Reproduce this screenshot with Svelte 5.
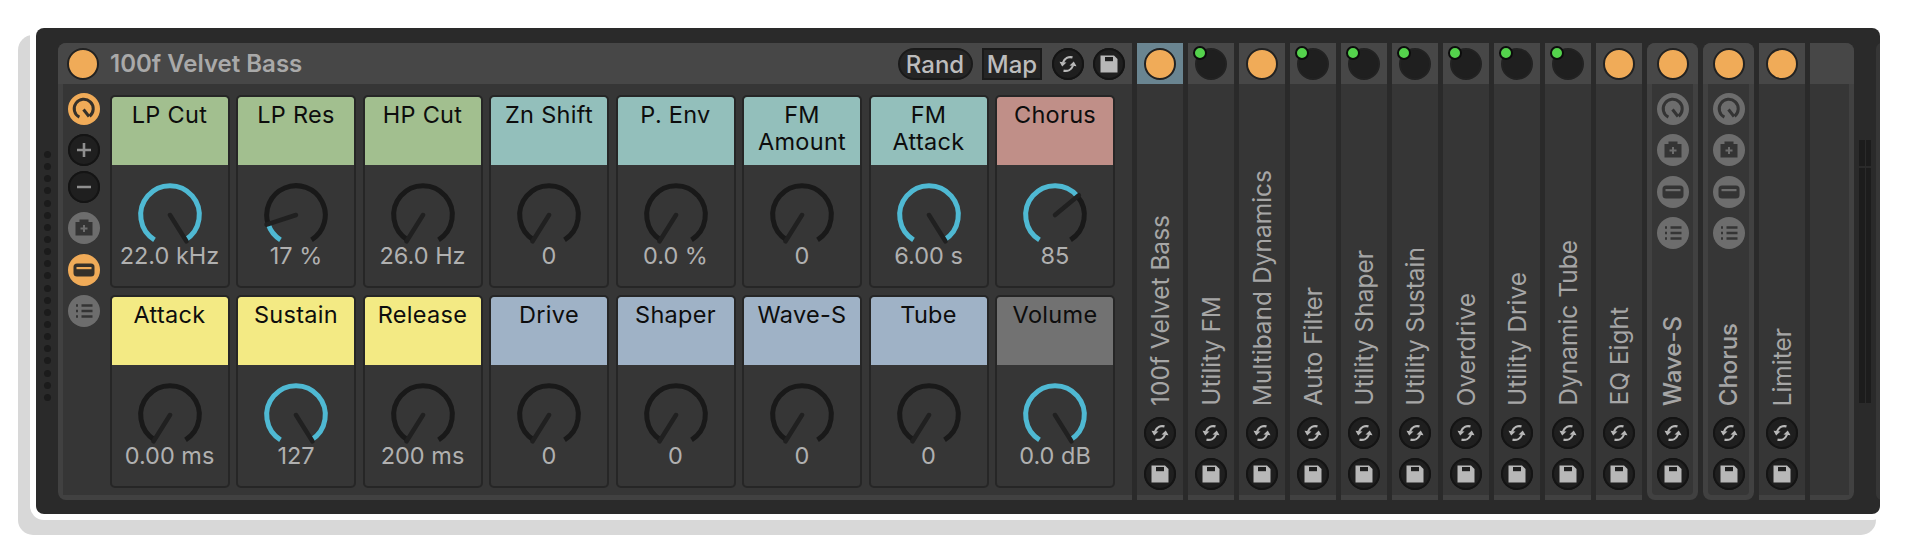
<script lang="ts">
  // device rack: one macro device, then the chain strip of folded devices
  const START = -148;
  const SWEEP = 296;

  function pt(deg: number, r: number) {
    const a = (deg * Math.PI) / 180;
    return `${(34 + r * Math.sin(a)).toFixed(2)} ${(34 - r * Math.cos(a)).toFixed(2)}`;
  }
  function arc(from: number, to: number) {
    const a = START + SWEEP * from;
    const b = START + SWEEP * to;
    return `M${pt(a, 29.3)} A29.3 29.3 0 ${b - a > 180 ? 1 : 0} 1 ${pt(b, 29.3)}`;
  }

  const rows = [
    [
      { name: 'LP Cut', value: '22.0 kHz', pos: 1, tone: 'green' },
      { name: 'LP Res', value: '17 %', pos: 0.135, tone: 'green' },
      { name: 'HP Cut', value: '26.0 Hz', pos: 0, tone: 'green' },
      { name: 'Zn Shift', value: '0', pos: 0, tone: 'teal' },
      { name: 'P. Env', value: '0.0 %', pos: 0, tone: 'teal' },
      { name: 'FM Amount', value: '0', pos: 0, tone: 'teal' },
      { name: 'FM Attack', value: '6.00 s', pos: 1, tone: 'teal' },
      { name: 'Chorus', value: '85', pos: 0.67, tone: 'pink' }
    ],
    [
      { name: 'Attack', value: '0.00 ms', pos: 0, tone: 'yellow' },
      { name: 'Sustain', value: '127', pos: 1, tone: 'yellow' },
      { name: 'Release', value: '200 ms', pos: 0, tone: 'yellow' },
      { name: 'Drive', value: '0', pos: 0, tone: 'blue' },
      { name: 'Shaper', value: '0', pos: 0, tone: 'blue' },
      { name: 'Wave-S', value: '0', pos: 0, tone: 'blue' },
      { name: 'Tube', value: '0', pos: 0, tone: 'blue' },
      { name: 'Volume', value: '0.0 dB', pos: 1, tone: 'gray' }
    ]
  ];

  const chain = [
    { name: '100f Velvet Bass', on: true, selected: true },
    { name: 'Utility FM', on: false },
    { name: 'Multiband Dynamics', on: true },
    { name: 'Auto Filter', on: false },
    { name: 'Utility Shaper', on: false },
    { name: 'Utility Sustain', on: false },
    { name: 'Overdrive', on: false },
    { name: 'Utility Drive', on: false },
    { name: 'Dynamic Tube', on: false },
    { name: 'EQ Eight', on: true },
    { name: 'Wave-S', on: true, group: true },
    { name: 'Chorus', on: true, group: true },
    { name: 'Limiter', on: true }
  ];
</script>

{#snippet glyph(kind: string)}
  <svg class="glyph" viewBox="0 0 32 32">
    {#if kind === 'knob'}
      <path class="line" d="M21.6 23.2A9.5 9.5 0 1 0 11.4 24.2" />
      <path class="line" d="M15.5 16.5L21 23.5" />
    {:else if kind === 'plus'}
      <path class="line thin" d="M9 16H23M16 9V23" />
    {:else if kind === 'minus'}
      <path class="line thin" d="M9 16H23" />
    {:else if kind === 'camera'}
      <path class="fill" d="M11.5 7.5H20.5V10H24.5V23.5H7.5V10H11.5Z" />
      <path class="cut" d="M12.5 16.5H19.5M16 13V20" />
    {:else if kind === 'fold'}
      <rect class="fill" x="5.5" y="9.5" width="21" height="13" rx="3.5" />
      <rect class="hole" x="8.5" y="13" width="15" height="2.2" />
    {:else if kind === 'list'}
      <path class="line list" d="M13.5 10.5H24.5M13.5 16H24.5M13.5 21.5H24.5" />
      <path class="line list" d="M8 10.5H10M8 16H10M8 21.5H10" />
    {:else if kind === 'sync'}
      <path class="stroke" d="M20.5 9.4C16.5 8.4 12.5 10.2 11 14.5" />
      <path class="solid" d="M7.5 13.8L14.5 14.4L10.2 18.4Z" />
      <path class="stroke" d="M11.5 22.6C15.5 23.6 19.5 21.8 21 17.5" />
      <path class="solid" d="M24.5 18.2L17.5 17.6L21.8 13.6Z" />
    {:else if kind === 'save'}
      <path class="solid" d="M7.5 7.5H21L24.5 11V24.5H7.5Z" />
      <rect class="slot" x="12" y="9" width="8" height="4.2" />
    {/if}
  </svg>
{/snippet}

{#snippet knob(pos: number)}
  <svg class="knob" viewBox="0 0 68 63">
    {#if pos < 1}
      <path class="track" d={arc(pos, 1)} />
    {/if}
    {#if pos > 0}
      <path class="active" d={arc(0, pos)} />
    {/if}
    <path class="needle" d="M34 34L{pt(START + SWEEP * pos, 31)}" />
  </svg>
{/snippet}

<div class="page">
  <div class="rack">
    <div class="grip">
      {#each Array(21) as _}
        <span class="dot"></span>
      {/each}
    </div>

    <section class="device">
      <header class="device-head">
        <span class="power"></span>
        <h1 class="title">100f Velvet Bass</h1>
        <div class="head-tools">
          <button class="rand">Rand</button>
          <button class="map">Map</button>
          <span class="btn">{@render glyph('sync')}</span>
          <span class="btn">{@render glyph('save')}</span>
        </div>
      </header>
      <div class="device-body">
        <div class="side">
          <span class="btn orange">{@render glyph('knob')}</span>
          <span class="btn">{@render glyph('plus')}</span>
          <span class="btn tight">{@render glyph('minus')}</span>
          <span class="btn muted">{@render glyph('camera')}</span>
          <span class="btn orange">{@render glyph('fold')}</span>
          <span class="btn muted">{@render glyph('list')}</span>
        </div>
        <div class="macros">
          {#each rows.flat() as m}
            <div class="macro">
              <div class="label {m.tone}">{m.name}</div>
              {@render knob(m.pos)}
              <div class="value">{m.value}</div>
            </div>
          {/each}
        </div>
      </div>
    </section>

    {#each chain as d}
      <section class="fold" class:group={d.group}>
        <div class="fold-head" class:selected={d.selected}>
          {#if d.on}
            <span class="power"></span>
          {:else}
            <span class="power off"><span class="led"></span></span>
          {/if}
        </div>
        <div class="fold-body">
          {#if d.group}
            <div class="group-tools">
              <span class="btn muted">{@render glyph('knob')}</span>
              <span class="btn muted">{@render glyph('camera')}</span>
              <span class="btn muted">{@render glyph('fold')}</span>
              <span class="btn muted">{@render glyph('list')}</span>
            </div>
          {/if}
          <span class="fold-name">{d.name}</span>
          <span class="btn">{@render glyph('sync')}</span>
          <span class="btn">{@render glyph('save')}</span>
        </div>
      </section>
    {/each}

    <section class="fold tail">
      <div class="fold-head"></div>
      <div class="fold-body"></div>
    </section>

    <div class="meter">
      <span class="bar"></span>
      <span class="bar"></span>
    </div>

    <section class="next"></section>
  </div>
</div>

<style>
  :global(body) {
    background: #fff;
  }
  .page {
    box-sizing: border-box;
    height: 551px;
    padding: 28px 0 0 36px;
  }
  .rack {
    box-sizing: border-box;
    display: flex;
    gap: 5px;
    width: 1844px;
    height: 486px;
    padding: 15px 0 14px 0;
    overflow: hidden;
    background: #2a2a2a;
    border-radius: 8px;
    box-shadow:
      0 0 0 6px #fff,
      -11px 14px 0 7px #d8d8d8;
    font-family: Inter, 'Liberation Sans', sans-serif;
  }
  .grip {
    flex: none;
    display: flex;
    flex-direction: column;
    align-items: center;
    gap: 5.15px;
    width: 17px;
    margin: 108px 0 0 0;
    padding-left: 5px;
    box-sizing: border-box;
  }
  .dot {
    flex: none;
    width: 7px;
    height: 7px;
    border-radius: 50%;
    background: #1b1b1b;
  }

  /* macro device */
  .device {
    flex: none;
    display: flex;
    flex-direction: column;
    width: 1074px;
    border-radius: 8px 0 0 8px;
    overflow: hidden;
    background: #414141;
  }
  .device-head {
    flex: none;
    display: flex;
    align-items: center;
    height: 41px;
    padding: 0 7px 0 9px;
    background: #474747;
  }
  .title {
    margin: 0 0 0 11px;
    font-size: 24px;
    font-weight: 600;
    color: #a9a9a9;
  }
  .head-tools {
    display: flex;
    align-items: center;
    gap: 9.5px;
    margin-left: auto;
  }
  .rand,
  .map {
    box-sizing: border-box;
    height: 32px;
    padding: 0;
    border: 2px solid #1a1a1a;
    background: #252525;
    color: #bdbdbd;
    font: 500 24px Inter, 'Liberation Sans', sans-serif;
  }
  .rand {
    width: 75px;
    border-radius: 16px;
  }
  .map {
    width: 60px;
  }
  .device-body {
    flex: 1;
    display: flex;
    margin: 0 0 5px 5px;
    background: #363636;
  }
  .side {
    flex: none;
    display: flex;
    flex-direction: column;
    gap: 9.4px;
    box-sizing: border-box;
    width: 46.5px;
    padding: 9px 0 0 4.5px;
  }
  .macros {
    display: grid;
    grid-template-columns: repeat(8, 120px);
    grid-template-rows: repeat(2, 193px);
    gap: 7px 6.5px;
    padding-top: 11px;
  }
  .macro {
    box-sizing: border-box;
    display: flex;
    flex-direction: column;
    align-items: center;
    border: 2px solid #262626;
    border-radius: 5px;
    overflow: hidden;
  }
  .label {
    box-sizing: border-box;
    flex: none;
    align-self: stretch;
    height: 68px;
    padding: 4px 4px 0;
    margin-bottom: 16px;
    border-radius: 2px 2px 0 0;
    text-align: center;
    font-size: 23.5px;
    line-height: 27px;
    letter-spacing: 0.3px;
    font-weight: 400;
    color: #0d0d0d;
  }
  .green { background: #a2bf8f; }
  .teal { background: #93bfbb; }
  .pink { background: #c08f88; }
  .yellow { background: #f3ea84; }
  .blue { background: #9fb2c6; }
  .gray { background: #727272; }
  .knob {
    flex: none;
    width: 68px;
    height: 63px;
  }
  .knob path {
    fill: none;
    stroke-width: 5;
  }
  .track { stroke: #191919; }
  .active { stroke: #4fb9d3; }
  .knob .needle {
    stroke: #202020;
    stroke-linecap: round;
    stroke-width: 4.5;
  }
  .value {
    font-size: 23.5px;
    line-height: 24px;
    white-space: nowrap;
    color: #b0b0b0;
  }

  /* round buttons */
  .btn {
    flex: none;
    display: block;
    width: 32px;
    height: 32px;
    border-radius: 50%;
    background: #1f1f1f;
    box-shadow: inset 0 0 0 2px #141414;
    color: #b8b8b8;
  }
  .tight {
    margin-top: -5px;
  }
  .orange {
    background: #f0ab58;
    box-shadow: none;
    color: #35302a;
  }
  .muted {
    background: #6d6d6d;
    box-shadow: none;
    color: #343434;
  }
  .orange .glyph {
    --hole: #f0ab58;
  }
  .muted .glyph {
    --hole: #6d6d6d;
  }
  .glyph {
    display: block;
    width: 100%;
    height: 100%;
    overflow: visible;
  }
  .line {
    fill: none;
    stroke: currentColor;
    stroke-width: 3;
  }
  .thin {
    stroke: #8f8f8f;
    stroke-width: 2.6;
  }
  .list {
    stroke-width: 2.4;
  }
  .fill {
    fill: currentColor;
  }
  .cut {
    fill: none;
    stroke: var(--hole);
    stroke-width: 2;
  }
  .hole {
    fill: var(--hole);
  }
  .stroke {
    fill: none;
    stroke: currentColor;
    stroke-width: 2.2;
  }
  .solid {
    fill: currentColor;
  }
  .slot {
    fill: #1f1f1f;
  }
  .power {
    box-sizing: border-box;
    position: relative;
    flex: none;
    display: block;
    width: 32px;
    height: 32px;
    border: 2px solid #222;
    border-radius: 50%;
    background: #f0ab58;
  }
  .power.off {
    background: #1f1f1f;
  }
  .led {
    position: absolute;
    left: -4px;
    top: -4px;
    box-sizing: border-box;
    width: 14px;
    height: 14px;
    border: 2px solid #0c0c0c;
    border-radius: 50%;
    background: #54d24c;
  }

  /* folded devices */
  .fold {
    flex: none;
    display: flex;
    flex-direction: column;
    width: 46px;
    background: #414141;
  }
  .fold-head {
    flex: none;
    display: flex;
    align-items: center;
    justify-content: center;
    height: 41px;
    background: #474747;
  }
  .fold-head.selected {
    background: #6a8591;
  }
  .fold-body {
    flex: 1;
    display: flex;
    flex-direction: column;
    align-items: center;
    gap: 9px;
    margin-bottom: 5px;
    padding-bottom: 5px;
    background: #363636;
  }
  .fold-name {
    margin-top: auto;
    margin-bottom: 2px;
    writing-mode: vertical-rl;
    transform: rotate(180deg);
    font-size: 24.5px;
    line-height: 28px;
    white-space: nowrap;
    color: #a6a6a6;
  }
  .group {
    width: 51px;
    border-radius: 8px;
    overflow: hidden;
  }
  .group .fold-body {
    margin: 0 5px 5px;
    border-radius: 0 0 4px 4px;
  }
  .group .fold-name {
    font-weight: 500;
    font-size: 24px;
  }
  .group-tools {
    display: flex;
    flex-direction: column;
    gap: 9.3px;
    padding-top: 9px;
  }
  .tail {
    width: 44px;
    border-radius: 0 8px 8px 0;
    overflow: hidden;
  }
  .tail .fold-body {
    margin-right: 5px;
  }
  .meter {
    flex: none;
    display: flex;
    gap: 1px;
    width: 12px;
    height: 263px;
    margin-top: 97px;
  }
  .bar {
    flex: none;
    width: 5.5px;
    background: linear-gradient(#1c1c1c 26.5px, transparent 26.5px, transparent 28px, #1c1c1c 28px);
  }
  .next {
    flex: none;
    width: 12px;
    margin-left: 0;
    border-radius: 6px 0 0 6px;
    background: #363636;
  }
</style>
